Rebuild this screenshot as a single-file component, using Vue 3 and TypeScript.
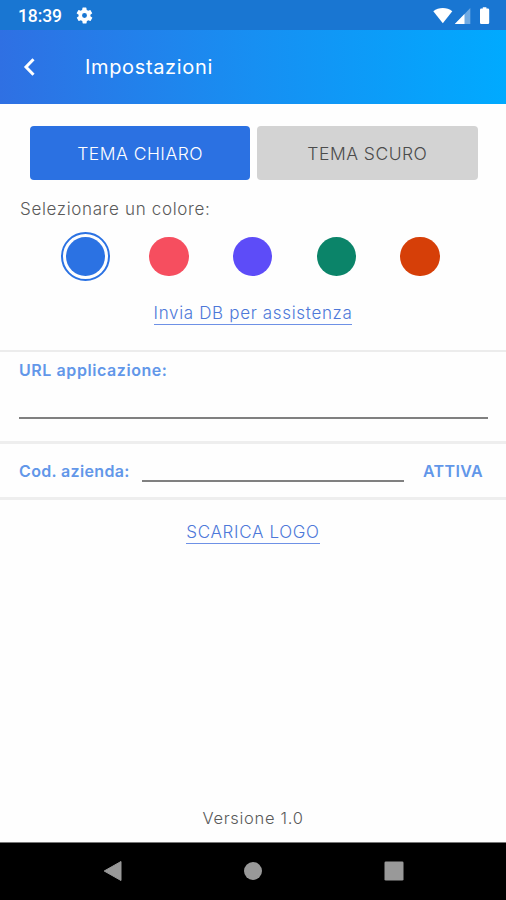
<script setup lang="ts">
import { ref } from 'vue'

interface Swatch {
  name: string
  color: string
}

const swatches: Swatch[] = [
  { name: 'blue', color: '#2b72e3' },
  { name: 'red', color: '#f64e5f' },
  { name: 'violet', color: '#5d4cf8' },
  { name: 'green', color: '#0b8469' },
  { name: 'orange', color: '#d63f08' },
]

const selected = ref('blue')
const theme = ref<'light' | 'dark'>('light')
const url = ref('')
const company = ref('')
</script>

<template>
  <div class="screen">
    <div class="status">
      <span class="clock">18:39</span>
      <svg class="gear" width="19" height="19" viewBox="0 0 24 24">
        <path
          fill="#fff"
          fill-rule="evenodd"
          d="M19.4 13a7.8 7.8 0 0 0 0-2l2.1-1.6a.5.5 0 0 0 .1-.7l-2-3.4a.5.5 0 0 0-.6-.2l-2.5 1a7.3 7.3 0 0 0-1.7-1l-.4-2.6a.5.5 0 0 0-.5-.5h-4a.5.5 0 0 0-.5.5l-.4 2.6a7.7 7.7 0 0 0-1.7 1l-2.5-1a.5.5 0 0 0-.6.2l-2 3.4a.5.5 0 0 0 .1.7L4.600 11a7.8 7.8 0 0 0 0 2l-2.100 1.600a.5.5 0 0 0-.1.700l2 3.400c.1.200.4.300.6.200l2.500-1a7.300 7.300 0 0 0 1.700 1l.4 2.600c0 .300.200.5.5.5h4c.300 0 .5-.200.5-.5l.4-2.600a7.700 7.700 0 0 0 1.700-1l2.500 1c.200.1.5 0 .6-.200l2-3.400a.5.5 0 0 0-.1-.7zM12 15.100a3.100 3.100 0 1 1 0-6.200 3.100 3.100 0 0 1 0 6.200z"
        />
      </svg>
      <svg class="signals" width="60" height="20" viewBox="0 0 60 20">
        <path d="M.3 5.200C5.600.9 14 .9 19.300 5.200L9.800 17.200z" fill="#fff" />
        <path d="M37.300 2v16H21.800z" fill="#fff" fill-opacity=".38" />
        <path d="M31.500 8v10h-9.700z" fill="#fff" />
        <path
          d="M48.300 2.600h1.500V1.200h3.600v1.400h1.500q1.300 0 1.300 1.300v12.800q0 1.300-1.300 1.300h-6.600q-1.300 0-1.300-1.300V3.900q0-1.300 1.300-1.300z"
          fill="#fff"
        />
      </svg>
    </div>

    <header class="bar">
      <svg class="back" width="14" height="20" viewBox="0 0 14 20">
        <path d="M11.500 2.200L4 10l7.500 7.800" fill="none" stroke="#fff" stroke-width="3" />
      </svg>
      <h1 class="title">Impostazioni</h1>
    </header>

    <main class="content">
      <div class="themes">
        <button class="theme" :class="{ active: theme === 'light' }" @click="theme = 'light'">
          TEMA CHIARO
        </button>
        <button class="theme" :class="{ active: theme === 'dark' }" @click="theme = 'dark'">
          TEMA SCURO
        </button>
      </div>

      <p class="pick">Selezionare un colore:</p>
      <div class="swatches">
        <div
          v-for="s in swatches"
          :key="s.name"
          class="swatch"
          :class="{ selected: selected === s.name }"
          :style="{ color: s.color }"
          @click="selected = s.name"
        >
          <i class="dot"></i>
        </div>
      </div>

      <div class="link-row"><a class="link">Invia DB per assistenza</a></div>

      <section class="url">
        <label class="label url-label">URL applicazione:</label>
        <input v-model="url" class="field" type="text" />
      </section>

      <section class="company">
        <label class="label code-label">Cod. azienda:</label>
        <input v-model="company" class="field" type="text" />
        <a class="label activate">ATTIVA</a>
      </section>

      <div class="link-row"><a class="link">SCARICA LOGO</a></div>
      <p class="version">Versione 1.0</p>
    </main>

    <nav class="nav">
      <svg width="20" height="22" viewBox="0 0 20 22">
        <path d="M1.200 11L18 1.500v19z" fill="#999" stroke="#999" stroke-linejoin="round" />
      </svg>
      <svg width="20" height="20" viewBox="0 0 20 20"><circle cx="10" cy="10" r="9" fill="#999" /></svg>
      <svg width="20" height="20" viewBox="0 0 20 20">
        <rect x=".5" y=".5" width="19" height="19" rx="1.300" fill="#999" />
      </svg>
    </nav>
  </div>
</template>

<style>
body {
  margin: 0;
}
</style>

<style scoped>
* {
  box-sizing: border-box;
}
.screen {
  width: 506px;
  height: 900px;
  display: flex;
  flex-direction: column;
  overflow: hidden;
  background: #fefefe;
  color: #5a5a5a;
  font-family: Inter, 'Open Sans', sans-serif;
  font-size: 16px;
  font-weight: 300;
  white-space: nowrap;
}
.status {
  height: 30px;
  flex: none;
  display: flex;
  align-items: center;
  padding: 1px 13px 0 18px;
  background: #1976d2;
}
.clock {
  width: 56.5px;
  color: #fff;
  font: 500 17.5px/30px Roboto, sans-serif;
  letter-spacing: -0.1px;
}
.signals {
  margin-left: auto;
}
.bar {
  height: 73.5px;
  flex: none;
  display: flex;
  align-items: center;
  padding-left: 22px;
  background: linear-gradient(90deg, #2f70e3, #178ff2 50%, #00aaff);
}
.title {
  margin: 0 0 0 49px;
  padding-top: 1px;
  color: #fff;
  font-size: 20px;
  line-height: 28px;
  font-weight: 400;
  letter-spacing: 0.65px;
}
.content {
  flex: 1;
  min-height: 0;
  display: flex;
  flex-direction: column;
}
.themes {
  display: flex;
  gap: 7px;
  padding: 22.5px 28.5px 0 30px;
}
.theme {
  flex: 1;
  height: 54px;
  padding: 1px 0 0;
  border: 0;
  border-radius: 4px;
  background: #d3d3d3;
  color: #4b4b4b;
  font: inherit;
  font-size: 17.5px;
  letter-spacing: 0.5px;
}
.theme.active {
  background: #2b71e2;
  color: #fff;
}
.pick {
  margin: 17px 0 0 20px;
  font-size: 17px;
  line-height: 24px;
  letter-spacing: 0.65px;
}
.swatches {
  display: flex;
  justify-content: space-between;
  padding: 11px 61.5px 0 61px;
}
.swatch {
  width: 49px;
  height: 49px;
  padding: 4.8px;
  border-radius: 50%;
}
.swatch.selected {
  padding: 2.8px;
  border: 2px solid currentColor;
}
.dot {
  display: block;
  width: 39.4px;
  height: 39.4px;
  border-radius: 50%;
  background: currentColor;
}
.link-row {
  display: flex;
  justify-content: center;
  margin-top: 20px;
}
.link {
  height: 24px;
  border-bottom: 1.5px solid #6e91e6;
  color: #4d78d9;
  font-size: 17px;
  line-height: 24px;
  letter-spacing: 0.66px;
}
.label {
  color: #6297e9;
  font-size: 16px;
  line-height: 22px;
  font-weight: 600;
  letter-spacing: 0.35px;
}
.url-label {
  letter-spacing: 0.57px;
}
.field {
  border: 0;
  border-bottom: 2px solid #808080;
  background: transparent;
  outline: 0;
  padding: 0;
  min-width: 0;
}
.url {
  height: 94px;
  flex: none;
  margin-top: 25px;
  border-top: 2px solid #ececec;
  border-bottom: 3px solid #eee;
  display: flex;
  flex-direction: column;
  padding: 7px 18px 22px 19px;
}
.url .field {
  margin-top: auto;
  height: 20px;
}
.company {
  height: 56px;
  flex: none;
  display: flex;
  align-items: center;
  padding: 0 18px 0 19px;
  border-bottom: 3px solid #eee;
}
.code-label {
  width: 123px;
}
.company .field {
  width: 262px;
  height: 22px;
}
.activate {
  margin-left: 19px;
}
.version {
  margin: auto 0 12px;
  text-align: center;
  font-size: 16.5px;
  line-height: 24px;
  letter-spacing: 0.7px;
}
.nav {
  height: 58px;
  flex: none;
  display: flex;
  justify-content: space-between;
  align-items: center;
  padding: 0 102.5px 2px;
  border-top: 1px solid #777;
  background: #000;
}
</style>
